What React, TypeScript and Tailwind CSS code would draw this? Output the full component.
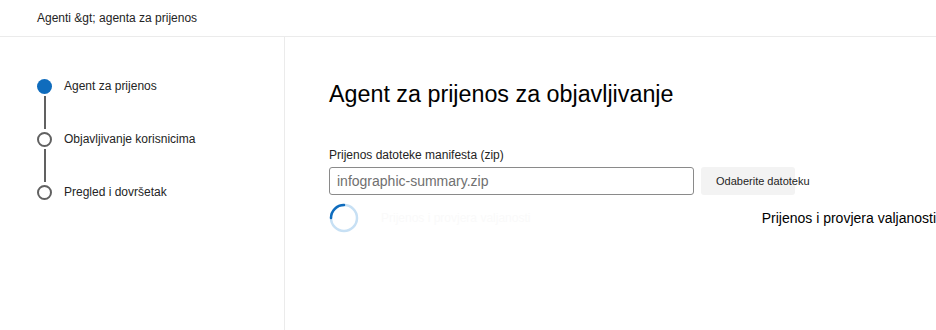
import React from 'react';

const steps = [
  { label: 'Agent za prijenos', active: true },
  { label: 'Objavljivanje korisnicima', active: false },
  { label: 'Pregled i dovršetak', active: false },
];

function Spinner() {
  return (
    <svg width="30" height="30" viewBox="0 0 30 30" className="shrink-0">
      <circle cx="15" cy="15" r="13" fill="none" stroke="#c7e0f4" strokeWidth="2.5" />
      <path d="M2 15 A13 13 0 0 1 15 2" fill="none" stroke="#0f6cbd" strokeWidth="2.5" strokeLinecap="round" />
    </svg>
  );
}

export default function App() {
  return (
    <div className="flex h-[330px] w-full flex-col bg-white text-[#242424] font-['Liberation_Sans',Arial,sans-serif]">
      {/* Breadcrumb header */}
      <header className="flex h-[37px] shrink-0 items-center border-b border-[#ebebeb] pl-[37px] text-[12px]">
        Agenti &amp;gt; agenta za prijenos
      </header>

      <div className="flex min-h-0 flex-1">
        {/* Steps sidebar */}
        <aside className="w-[285px] shrink-0 border-r border-[#ebebeb] pl-[37px] pt-[41px]">
          {steps.map((s, i) => (
            <div key={s.label}>
              <div className="flex h-[16px] items-center gap-[12px]">
                {s.active ? (
                  <span className="h-[15px] w-[15px] rounded-full bg-[#0f6cbd]" />
                ) : (
                  <span className="h-[15px] w-[15px] rounded-full border-2 border-[#616161]" />
                )}
                <span className="text-[12px] leading-none">{s.label}</span>
              </div>
              {i < steps.length - 1 && <div className="my-[2px] ml-[6.5px] h-[33px] w-[2px] bg-[#616161]" />}
            </div>
          ))}
        </aside>

        {/* Main panel */}
        <main className="min-w-0 flex-1 pl-[44px] pt-[43px]">
          <h1 className="text-[23.3px] leading-[28px] text-black">Agent za prijenos za objavljivanje</h1>

          <label className="mt-[39px] block text-[12px] leading-[16px]">Prijenos datoteke manifesta (zip)</label>
          <div className="mt-[4px] flex items-center gap-[7px]">
            <div className="flex h-[28px] w-[365px] items-center rounded-[3px] border border-[#8a8a8a] px-[7px] text-[14px] text-[#707070]">
              infographic-summary.zip
            </div>
            <button
              type="button"
              className="h-[28px] w-[94px] overflow-visible whitespace-nowrap rounded-[3px] bg-[#f3f3f3] pl-[15px] text-left text-[11px]"
            >
              Odaberite datoteku
            </button>
          </div>

          <div className="mt-[8px] flex items-center">
            <Spinner />
            <span className="ml-[22px] text-[12px] text-[#fafafa]">Prijenos i provjera valjanosti</span>
            <span className="ml-auto whitespace-nowrap text-[14px] text-black">Prijenos i provjera valjanosti</span>
          </div>
        </main>
      </div>
    </div>
  );
}
